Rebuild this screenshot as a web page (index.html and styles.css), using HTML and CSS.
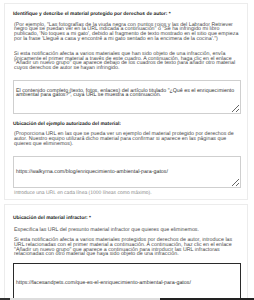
FILE: index.html
```html
<!DOCTYPE html>
<html lang="es">
  <head>
    <meta charset="UTF-8" />
    <meta name="viewport" content="width=device-width, initial-scale=1.0" />
    <title>Notificación de derechos de autor</title>
    <link rel="stylesheet" href="styles.css">
  </head>
  <body>
    <div class="card">
      <div class="group">
        <h3 class="label">Identifique y describe el material protegido por derechos de autor: *</h3>
        <p class="help">(Por ejemplo, "Las fotografías de la viuda negra con puntos rojos y las del Labrador Retriever negro que se puedan ver en la URL indicada a continuación" o "Se ha infringido mi libro publicado, 'No toques a mi gato', debido al fragmento de texto mostrado en el sitio que empieza por la frase 'Llegué a casa y encontré a mi gato sentado en la encimera de la cocina'.")</p>
        <p class="help help-gap">Si esta notificación afecta a varios materiales que han sido objeto de una infracción, envía únicamente el primer material a través de este cuadro. A continuación, haga clic en el enlace "Añadir un nuevo grupo" que aparece debajo de los cuadros de texto para añadir otro material cuyos derechos de autor se hayan infringido.</p>
        <textarea class="field field-1">

El contenido completo (texto, fotos, enlaces) del artículo titulado "¿Qué es el enriquecimiento ambiental para gatos?", cuya URL se muestra a continuación.</textarea>
      </div>

      <div class="group group-2">
        <h3 class="label">Ubicación del ejemplo autorizado del material:</h3>
        <p class="help">(Proporciona URL en las que se pueda ver un ejemplo del material protegido por derechos de autor. Nuestro equipo utilizará dicho material para confirmar si aparece en las páginas que quieres que eliminemos).</p>
        <textarea class="field field-2">


https://walkyrna.com/blog/enriquecimiento-ambiental-para-gatos/</textarea>
        <p class="hint">Introduce una URL en cada línea (1000 líneas como máximo).</p>
      </div>
    </div>

    <div class="card card-2">
      <div class="group">
        <h3 class="label">Ubicación del material infractor: *</h3>
        <p class="help">Especifica las URL del presunto material infractor que quieres que eliminemos.</p>
        <p class="help help-small-gap">Si esta notificación afecta a varios materiales protegidos por derechos de autor, introduce las URL relacionadas con el primer material a continuación. A continuación, haz clic en el enlace "Añadir un nuevo grupo" que aparece a continuación para introducir las URL infractoras relacionadas con otro material que haya sido objeto de una infracción.</p>
        <textarea class="field field-3 active">



https://facesandpets.com/que-es-el-enriquecimiento-ambiental-para-gatos/</textarea>
      </div>
    </div>

    <div class="bottom-bar"></div>
  </body>
</html>
```

FILE: styles.css
```css
* {
  margin: 0;
  padding: 0;
  box-sizing: border-box;
}

body {
  font-family: "Liberation Sans", Arial, sans-serif;
  background: #fff;
  padding: 3px 6px 0 4px;
  color: #444;
  text-rendering: geometricPrecision;
}

.card {
  background: #fff;
  border: 1px solid #ececec;
  padding: 8px 6px 3px 8px;
  margin-bottom: 4px;
}

.card-2 {
  padding-top: 11px;
}

.label {
  font-size: 4.9px;
  line-height: 5px;
  font-weight: bold;
  color: #222;
  margin-bottom: 5.6px;
}

.card-2 .label {
  margin-bottom: 6.6px;
}

.help {
  font-size: 5.3px;
  line-height: 4.67px;
  color: #4a4a4a;
  padding-left: 1px;
}

.help-gap {
  margin-top: 10.7px;
}

.help-small-gap {
  margin-top: 5.9px;
}

.group-2 {
  margin-top: 8.2px;
}

.group-2 .label {
  margin-bottom: 5.2px;
}

.field {
  display: block;
  width: 100%;
  font-family: "Liberation Sans", Arial, sans-serif;
  font-size: 5.3px;
  line-height: 4.67px;
  text-rendering: geometricPrecision;
  color: #333;
  background: #fff;
  border: 1px solid #cfcfcf;
  padding: 3px 2px;
  overflow: hidden;
}

.field-1 {
  height: 34px;
  margin-top: 9.3px;
}

.field-2 {
  height: 32px;
  margin-top: 10px;
}

.field-3 {
  height: 60px;
  margin-top: 6px;
}

.field.active {
  border-color: #2a2a2a;
}

.hint {
  font-size: 5px;
  line-height: 4.67px;
  color: #8a8a8a;
  margin-top: 3px;
  padding-left: 1px;
}

.bottom-bar {
  position: fixed;
  left: 0;
  right: 0;
  bottom: 0;
  height: 2px;
  background: linear-gradient(to right, #333 0, #333 10px, #ddd 10px, #ddd 160px, #222 160px);
}
```
